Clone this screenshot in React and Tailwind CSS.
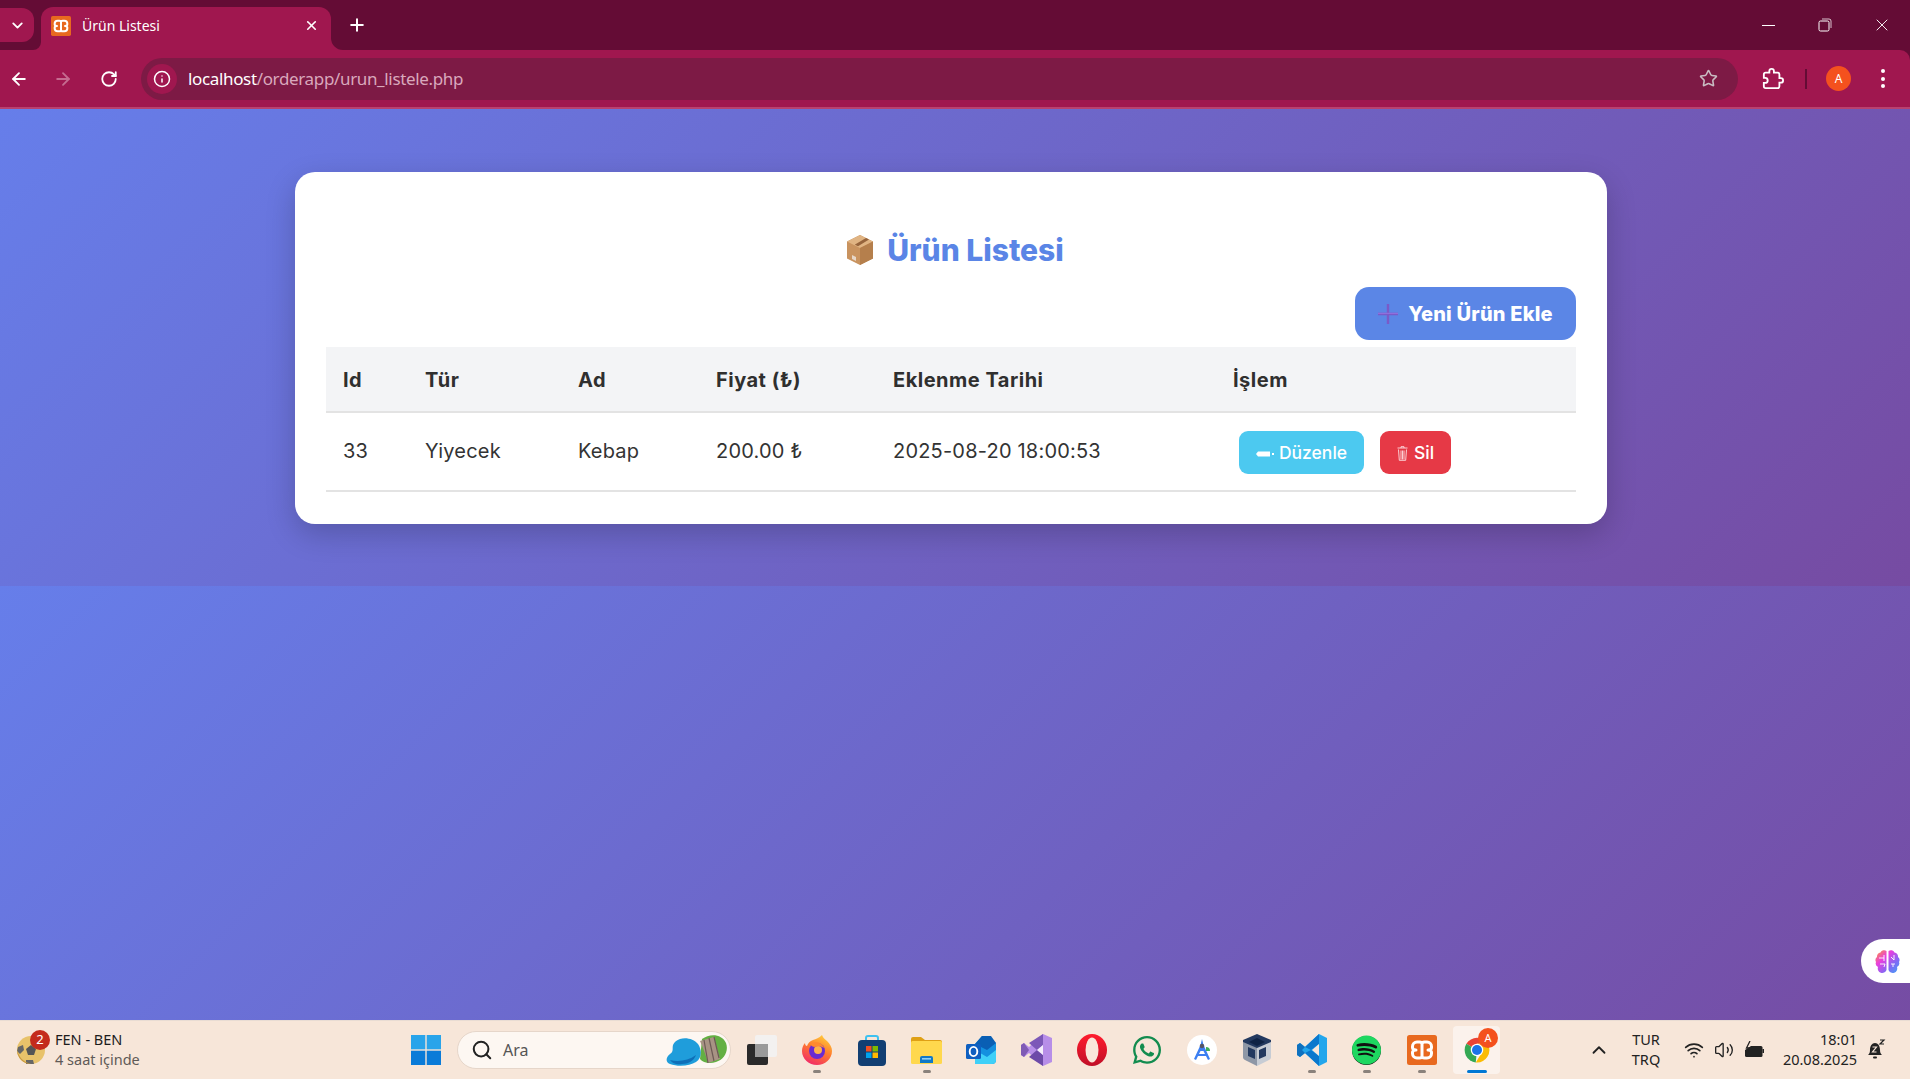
import React from "react";
import { ArrowLeft, ArrowRight, RotateCw, Info, Star, X, Plus, ChevronDown, ChevronUp, Wifi, Volume2, Search } from "lucide-react";
import { FaWhatsapp, FaSpotify } from "react-icons/fa";

const Xampp = ({ s = 30 }) => (
  <svg width={s} height={s} viewBox="0 0 30 30">
    <rect width="30" height="30" rx="2.500" fill="#e8691f" />
    <path d="M10 7h2.500c1.500 0 2.500 1 2.500 2 0-1 1-2 2.500-2H20a4.500 4.500 0 0 1 4.500 4.500v1c0 1.500-1.500 2.500-3.500 2.500 2 0 3.500 1 3.500 2.500v1A4.500 4.500 0 0 1 20 23h-2.500c-1.500 0-2.500-1-2.500-2 0 1-1 2-2.500 2H10a4.500 4.500 0 0 1-4.500-4.500v-1C5.500 16 7 15 9 15c-2 0-3.500-1-3.500-2.500v-1A4.500 4.500 0 0 1 10 7zM15 9v12" fill="none" stroke="#fff" strokeWidth="3" strokeLinejoin="round" />
  </svg>
);

const Firefox = () => (
  <svg width="30" height="32" viewBox="0 0 30 32">
    <defs>
      <linearGradient id="ff" x1="0.7" y1="0" x2="0.2" y2="1">
        <stop offset="0" stopColor="#ffc93a" />
        <stop offset="0.45" stopColor="#ff7a2e" />
        <stop offset="1" stopColor="#f0246e" />
      </linearGradient>
    </defs>
    <path d="M20 1c1 3 3 4 5 6 3 3 5 6 5 10 0 8-7 14-15 14S0 25 0 17c0-3 1-6 3-8 0 2 1 3 2 3 1-3 3-5 6-6 3-1 6-2 9-5z" fill="url(#ff)" />
    <circle cx="15" cy="17" r="8" fill="#6a2bd0" />
    <circle cx="16" cy="16" r="4" fill="#ffb14a" />
    <path d="M8 10c5-3 12-2 14 4-3-2-6-2-9-1-2 0-4-1-5-3z" fill="#ff8a2e" />
  </svg>
);

const Store = () => (
  <svg width="30" height="31" viewBox="0 0 30 31">
    <path d="M9 6V3a2 2 0 0 1 2-2h8a2 2 0 0 1 2 2v3" fill="none" stroke="#3ec1f0" strokeWidth="2" />
    <rect x="1" y="5" width="28" height="26" rx="4" fill="#123f73" />
    <rect x="9" y="11" width="5.5" height="5.5" fill="#f25022" />
    <rect x="15.5" y="11" width="5.5" height="5.5" fill="#7fba00" />
    <rect x="9" y="17.5" width="5.5" height="5.5" fill="#00a4ef" />
    <rect x="15.5" y="17.5" width="5.5" height="5.5" fill="#ffb900" />
  </svg>
);

const Folder = () => (
  <svg width="31" height="28" viewBox="0 0 31 28">
    <path d="M0 3a2 2 0 0 1 2-2h8l4 3h15a2 2 0 0 1 2 2v4H0z" fill="#dfa015" />
    <rect y="5" width="31" height="23" rx="1.5" fill="#ffd84d" />
    <path d="M9 27v-5a2 2 0 0 1 2-2h9a2 2 0 0 1 2 2v5z" fill="#1179c7" />
    <rect x="11" y="22" width="9" height="1.6" fill="#8fd0f5" />
  </svg>
);

const Outlook = () => (
  <svg width="31" height="30" viewBox="0 0 31 30">
    <path d="M16 1l14 7v17a4 4 0 0 1-4 4H9V9z" fill="#1490df" />
    <path d="M9 9l7-8h9l5 7-9 7z" fill="#0a5fb4" />
    <path d="M9 15l12 7 9-7v10a4 4 0 0 1-4 4H9z" fill="#3fd0f8" />
    <rect y="9" width="15" height="15" rx="1.5" fill="#0f5fc0" />
    <ellipse cx="7.5" cy="16.5" rx="3.8" ry="4.6" fill="none" stroke="#fff" strokeWidth="1.9" />
  </svg>
);

const VS = () => (
  <svg width="31" height="32" viewBox="0 0 31 32">
    <path d="M22 0l9 4v24l-9 4-14-13-5 4-3-2V11l3-2 5 4z" fill="#b78ee8" />
    <path d="M22 0v11l-6 5-8-7z" fill="#7c58b8" />
    <path d="M22 32V21l-6-5-8 7z" fill="#6d4aa8" />
    <path d="M0 11l3-2 5 7-5 7-3-2z" fill="#7f5bb5" />
    <path d="M22 11v10l-6-5z" fill="#f4eefb" />
  </svg>
);

const Opera = () => (
  <svg width="30" height="32" viewBox="0 0 30 32">
    <defs>
      <linearGradient id="op" x1="0" y1="0" x2="0" y2="1">
        <stop offset="0" stopColor="#ff1b2d" />
        <stop offset="1" stopColor="#c00f28" />
      </linearGradient>
    </defs>
    <ellipse cx="15" cy="16" rx="15" ry="16" fill="url(#op)" />
    <ellipse cx="15" cy="16" rx="6.5" ry="12.5" fill="#f9e7da" />
  </svg>
);

const AndroidStudio = () => (
  <svg width="30" height="30" viewBox="0 0 30 30">
    <circle cx="15" cy="15" r="15" fill="#fff" />
    <path d="M15 4l1.500 6h-3zM13 11h4l6 13-2 1-4.500-9h-3L9 25l-2-1z" fill="#3b7ff2" />
    <path d="M10 19h10v2H10z" fill="#3b7ff2" />
    <circle cx="15" cy="11" r="2.300" fill="#556" />
    <path d="M19 12a4 4 0 0 1 4 4h-4z" fill="#3fae5c" />
  </svg>
);

const VBox = () => (
  <svg width="28" height="32" viewBox="0 0 28 32">
    <path d="M14 0l14 6v6l-14 6L0 12V6z" fill="#23395f" />
    <path d="M0 8l14 6v18L2 26a3 3 0 0 1-2-3z" fill="#8e97a6" />
    <path d="M28 8l-14 6v18l12-6a3 3 0 0 0 2-3z" fill="#c7ccd4" />
    <path d="M14 4l8 4-8 4-8-4z" fill="#0f2344" />
    <path d="M5 13l7 3v9l-7-3zM23 13l-7 3v9l7-3z" fill="#23395f" />
  </svg>
);

const VSCode = () => (
  <svg width="30" height="32" viewBox="0 0 30 32">
    <path d="M22 0l8 4v24l-8 4-14-13-5 4-3-2V11l3-2 5 4z" fill="#23a6ec" />
    <path d="M22 0v10l-8 6-6-3z" fill="#0a78cd" />
    <path d="M22 32V22l-8-6-6 3z" fill="#0a78cd" />
    <path d="M22 10v12l-7-6z" fill="#f9e7da" />
    <path d="M3 9l5 4-3 3 3 3-5 4-3-2V11z" fill="#0e71bf" />
  </svg>
);

const Chrome = () => (
  <svg width="30" height="30" viewBox="0 0 48 48">
    <path d="M24 24L7 14A20 20 0 0 1 41 14H24z" fill="#ea4335" />
    <path d="M24 24L7 14a20 20 0 0 0 15 30z" fill="#34a853" />
    <path d="M24 14h17a20 20 0 0 1-19 30l9-15z" fill="#fbbc04" />
    <circle cx="24" cy="24" r="10" fill="#fff" />
    <circle cx="24" cy="24" r="8" fill="#1a73e8" />
  </svg>
);

const Brain = () => (
  <svg width="25" height="25" viewBox="0 0 25 25">
    <defs>
      <linearGradient id="br" x1="0" y1="0" x2="1" y2="1">
        <stop offset="0" stopColor="#ff9a2e" />
        <stop offset="0.35" stopColor="#e83ee0" />
        <stop offset="0.7" stopColor="#7b6cf5" />
        <stop offset="1" stopColor="#3ea6f5" />
      </linearGradient>
    </defs>
    <path d="M11.500 2a4 4 0 0 0-6 1.500A4 4 0 0 0 2 8a4 4 0 0 0-1 5 4 4 0 0 0 2 5 4.500 4.500 0 0 0 8.500 3zM13.500 2a4 4 0 0 1 6 1.500A4 4 0 0 1 23 8a4 4 0 0 1 1 5 4 4 0 0 1-2 5 4.500 4.500 0 0 1-8.500 3z" fill="url(#br)" />
    <path d="M4 9h5M9 6v6M5 15h5l-1 3M16 8l3 3M19 6v5M16 15h4M18 15v3" stroke="#fff" strokeWidth="0.9" fill="none" />
  </svg>
);

const Box = () => (
  <svg width="30" height="32" viewBox="0 0 30 32">
    <path d="M15 1l13 6.500v17L15 31 2 24.500v-17z" fill="#c9935f" />
    <path d="M15 1l13 6.500L15 14 2 7.500z" fill="#e0b483" />
    <path d="M15 14l13-6.500v17L15 31z" fill="#b57f4c" />
    <path d="M21 4l-11 6.500 0 .3 3 1.500L24 5.500z" fill="#96643c" />
    <path d="M7 21l4 2v4l-4-2z" fill="#ece3da" opacity="0.85" />
  </svg>
);

const PlusEmoji = () => (
  <svg width="20" height="20" viewBox="0 0 20 20">
    <path d="M8.800 0h2.400v8.800H20v2.400h-8.800V20H8.800v-8.800H0V8.800h8.800z" fill="#7a5ac8" />
    <path d="M8.800 8.800H0v1.200h20V8.800z" fill="#8f6fdc" />
  </svg>
);

const Pencil = () => (
  <svg width="18" height="8" viewBox="0 0 18 8" className="mr-[5px]">
    <path d="M0 4l2-2.500h12V6.500H2z" fill="#fff" />
    <rect x="16" y="3" width="2" height="2" fill="#fff" />
  </svg>
);

const Trash = () => (
  <svg width="11" height="15" viewBox="0 0 11 15" className="mr-[6px]">
    <path d="M0.500 2h10M4 2V.7h3V2M1.500 3.500l.8 10.800h6.400l.8-10.800M4 4.500v9M5.500 4.500v9M7 4.500v9" fill="none" stroke="#fde0e3" strokeWidth="0.9" />
  </svg>
);

const Ball = () => (
  <svg width="28" height="28" viewBox="0 0 28 28">
    <circle cx="14" cy="14" r="14" fill="#e8c26a" />
    <path d="M14 9l5 4-2 6h-6l-2-6z" fill="#555" />
    <path d="M1 11l5-2 1 5-4 4-3-3zM9 24l7 0 1 4H9z" fill="#666" />
    <path d="M0 14a14 14 0 0 0 14 14c-8-2-12-7-14-14z" fill="#c99a3f" />
  </svg>
);

const Illustration = () => (
  <svg width="62" height="34" viewBox="0 0 62 34">
    <path d="M36 6c8-6 20-5 24 4 3 8-2 17-10 19-6 2-13 1-16-3z" fill="#63b043" />
    <path d="M34 8l14-4 6 22-12 4c-2-8-5-15-8-22z" fill="#a89384" />
    <path d="M38 7l4 23M43 5l5 23M48 4l5 21" stroke="#6d5a55" strokeWidth="1.200" />
    <path d="M14 6c6-2 14 0 18 5 4 6 4 14-2 18-6 4-18 5-26 2-5-2-4-7 0-10 4-3 2-5 3-9 1-3 4-5 7-6z" fill="#1f9ddb" />
    <path d="M4 27c8 2 18 1 26-5-2 6-8 9-14 9-5 1-9 0-12-4z" fill="#0f6fb8" />
  </svg>
);

const Dot = () => (
  <span className="absolute bottom-[1px] left-1/2 h-[3px] w-[8px] -translate-x-1/2 rounded-full bg-[#8a817b]" />
);

const Slot = ({ children, dot }) => (
  <div className="relative flex h-[48px] w-[55px] shrink-0 items-center justify-center">
    {children}
    {dot && <Dot />}
  </div>
);

const rows = [
  { id: "33", type: "Yiyecek", name: "Kebap", price: "200.00 ₺", date: "2025-08-20 18:00:53" },
];

export default function App() {
  return (
    <div className="flex h-[1079px] w-[1910px] flex-col overflow-hidden font-['Noto_Sans',sans-serif]">
      {/* tab strip */}
      <div className="flex h-[50px] shrink-0 items-end bg-[#640c35]">
        <div className="mb-[8px] flex h-[34px] w-[34px] items-center justify-center rounded-r-[12px] bg-[#a0174f]">
          <ChevronDown size={17} color="#fff" strokeWidth={2.6} />
        </div>
        <div className="relative ml-[7px] flex h-[43px] w-[290px] items-center rounded-t-[12px] bg-[#a0174f] pb-[6px] pl-[10px]">
          <Xampp s={20} />
          <span className="ml-[11px] text-[14px] text-white">Ürün Listesi</span>
          <X size={15} color="#fff" strokeWidth={2.6} className="absolute left-[263px] top-[11px]" />
          <svg width="12" height="12" viewBox="0 0 12 12" className="absolute bottom-0 left-[290px]">
            <path d="M0 0a12 12 0 0 0 12 12H0z" fill="#a0174f" />
          </svg>
          <svg width="8" height="8" viewBox="0 0 8 8" className="absolute bottom-0 left-[-8px]">
            <path d="M8 0a8 8 0 0 1-8 8h8z" fill="#a0174f" />
          </svg>
        </div>
        <Plus size={20} color="#fff" strokeWidth={2.4} className="mb-[15px] ml-[16px]" />
        <div className="mb-[15px] ml-auto flex items-center gap-[43px] pr-[18px]">
          <span className="h-[1px] w-[13px] bg-white" />
          <svg width="14" height="14" viewBox="0 0 14 14" fill="none" stroke="#fff" strokeWidth="1">
            <rect x="1" y="3" width="10" height="10" rx="1.500" />
            <path d="M4 1h7a2 2 0 0 1 2 2v7" opacity="0.75" />
          </svg>
          <X size={20} color="#fff" strokeWidth={1.1} className="ml-[-3px]" />
        </div>
      </div>

      {/* toolbar */}
      <div className="flex h-[59px] shrink-0 items-center rounded-tr-[10px] border-b-2 border-[#b9416f] bg-[#a0174f] pl-[9px] shadow-[10px_0_0_#640c35]">
        <ArrowLeft size={20} color="#fff" strokeWidth={2.2} />
        <ArrowRight size={20} color="#c56c90" strokeWidth={2.2} className="ml-[24px]" />
        <RotateCw size={18} color="#fff" strokeWidth={2.4} className="ml-[27px]" />
        <div className="ml-[23px] flex h-[42px] w-[1597px] items-center rounded-full bg-[#7d1a45] pl-[6px] pr-[20px]">
          <span className="flex h-[30px] w-[30px] items-center justify-center rounded-full bg-[#a0174f]">
            <Info size={18} color="#fff" strokeWidth={2} />
          </span>
          <span className="ml-[11px] pt-[1px] text-[17px] tracking-[-0.35px] text-white">
            localhost<span className="text-[#d9a8bc]">/orderapp/urun_listele.php</span>
          </span>
          <Star size={19} color="#c9bcc2" strokeWidth={2} className="ml-auto" />
        </div>
        <svg width="22" height="22" viewBox="0 0 24 24" fill="none" stroke="#fff" strokeWidth="2" className="ml-[24px]">
          <path d="M20.500 11H19V7c0-1.100-.9-2-2-2h-4V3.500C13 2.120 11.880 1 10.500 1S8 2.120 8 3.500V5H4c-1.100 0-1.990.9-1.990 2v3.800H3.500c1.490 0 2.700 1.210 2.700 2.700s-1.210 2.700-2.700 2.700H2V20c0 1.100.9 2 2 2h13c1.100 0 2-.9 2-2v-4h1.500c1.380 0 2.500-1.120 2.500-2.500S21.880 11 20.500 11z" />
        </svg>
        <span className="ml-[21px] h-[20px] w-[2px] bg-[#640c35]" />
        <span className="ml-[19px] flex h-[25px] w-[25px] items-center justify-center rounded-full bg-[#f4511e] text-[12px] text-white">A</span>
        <span className="ml-[30px] flex flex-col gap-[3.500px]">
          <span className="h-[4px] w-[4px] rounded-full bg-white" />
          <span className="h-[4px] w-[4px] rounded-full bg-white" />
          <span className="h-[4px] w-[4px] rounded-full bg-white" />
        </span>
      </div>

      {/* page */}
      <main className="relative min-h-0 flex-1 bg-[linear-gradient(135deg,#667eea_0%,#764ba2_100%)] bg-[length:100%_477px] pl-[295px] pt-[63px] font-['Inter',sans-serif]">
        <div className="w-[1312px] rounded-[20px] bg-white px-[31px] pb-[32px] pt-[54px] shadow-[0_10px_30px_rgba(0,0,0,0.2)]">
          <h2 className="flex h-[48px] items-center justify-center pl-[7px] text-[30px] font-extrabold tracking-[0px] text-[#5a85e6]">
            <Box />
            <span className="ml-[12px]">Ürün Listesi</span>
          </h2>
          <div className="mt-[13px] flex justify-end">
            <button className="flex h-[53px] w-[221px] items-center justify-center rounded-[14px] bg-[#5b86e6] text-[20px] font-extrabold tracking-[0.2px] text-white">
              <PlusEmoji />
              <span className="ml-[10px]">Yeni Ürün Ekle</span>
            </button>
          </div>
          <table className="mt-[7px] w-[1250px] table-fixed border-collapse text-left">
            <colgroup>
              <col className="w-[82px]" />
              <col className="w-[153px]" />
              <col className="w-[138px]" />
              <col className="w-[177px]" />
              <col className="w-[340px]" />
              <col className="w-[360px]" />
            </colgroup>
            <thead>
              <tr className="h-[65px] border-b-2 border-[#e3e3e3] bg-[#f3f4f6] text-[20px] font-bold tracking-[0.5px] text-[#2f2f2f]">
                <th className="pl-[17px] pt-[2px]">Id</th>
                <th className="pl-[17px] pt-[2px]">Tür</th>
                <th className="pl-[17px] pt-[2px]">Ad</th>
                <th className="pl-[17px] pt-[2px]">Fiyat (₺)</th>
                <th className="pl-[17px] pt-[2px]">Eklenme Tarihi</th>
                <th className="pl-[17px] pt-[2px]">İşlem</th>
              </tr>
            </thead>
            <tbody>
              {rows.map((r) => (
                <tr key={r.id} className="h-[79px] border-b-2 border-[#e3e3e3] text-[20px] tracking-[0.2px] text-[#333]">
                  <td className="pb-[2px] pl-[17px]">{r.id}</td>
                  <td className="pb-[2px] pl-[17px]">{r.type}</td>
                  <td className="pb-[2px] pl-[17px]">{r.name}</td>
                  <td className="pb-[2px] pl-[17px]">{r.price}</td>
                  <td className="pb-[2px] pl-[17px]">{r.date}</td>
                  <td className="pl-[23px] pt-[2px]">
                    <div className="flex items-center gap-[16px] text-[17.5px] font-medium tracking-normal text-white">
                      <button className="flex h-[43px] w-[125px] items-center justify-center rounded-[9px] bg-[#4cc9f0] pt-[2px]">
                        <Pencil />Düzenle
                      </button>
                      <button className="flex h-[43px] w-[71px] items-center justify-center rounded-[9px] bg-[#e63946] pt-[2px]">
                        <Trash />Sil
                      </button>
                    </div>
                  </td>
                </tr>
              ))}
            </tbody>
          </table>
        </div>
        <div className="absolute right-0 top-[830px] flex h-[44px] w-[49px] items-center rounded-l-[22px] bg-white pl-[14px]">
          <Brain />
        </div>
      </main>

      {/* taskbar */}
      <div className="flex h-[59px] shrink-0 items-center border-t border-[#e9dcd3] bg-[#f7e6d9] pl-[17px]">
        <div className="relative h-[28px] w-[28px]">
          <Ball />
          <span className="absolute left-[13px] top-[-6px] flex h-[20px] w-[20px] items-center justify-center rounded-full bg-[#c42b1c] text-[13px] text-white">2</span>
        </div>
        <div className="ml-[10px] flex w-[120px] flex-col pb-[2px] text-[14.5px] leading-[20px]">
          <span className="text-[#1c1c1c]">FEN - BEN</span>
          <span className="text-[#5f5a57]">4 saat içinde</span>
        </div>
        <svg width="30" height="30" viewBox="0 0 30 30" className="ml-[236px] shrink-0">
          <rect width="14.300" height="14.300" fill="#29a4ea" />
          <rect x="15.700" width="14.300" height="14.300" fill="#29a4ea" />
          <rect y="15.700" width="14.300" height="14.300" fill="#0a7bd8" />
          <rect x="15.700" y="15.700" width="14.300" height="14.300" fill="#0a7bd8" />
        </svg>
        <div className="ml-[16px] flex h-[38px] w-[274px] shrink-0 items-center justify-between rounded-full border border-[#e6d6ca] bg-[#fdf7f2] pl-[13px] pr-[2px]">
          <span className="flex items-center">
            <Search size={22} color="#222" strokeWidth={2.2} />
            <span className="ml-[10px] text-[16px] text-[#555]">Ara</span>
          </span>
          <Illustration />
        </div>
        <svg width="30" height="30" viewBox="0 0 30 30" className="ml-[16px] shrink-0">
          <rect x="0" y="9" width="21" height="21" rx="2" fill="#2a2a2a" />
          <rect x="8" y="0" width="22" height="22" rx="2" fill="#f2f2f2" opacity="0.9" />
          <rect x="8" y="9" width="13" height="13" fill="#9a9a9a" />
        </svg>
        <div className="ml-[12px] flex items-center">
          <Slot dot><Firefox /></Slot>
          <Slot><Store /></Slot>
          <Slot dot><Folder /></Slot>
          <Slot><Outlook /></Slot>
          <Slot><VS /></Slot>
          <Slot><Opera /></Slot>
          <Slot><FaWhatsapp size={32} color="#128c4f" /></Slot>
          <Slot><AndroidStudio /></Slot>
          <Slot><VBox /></Slot>
          <Slot dot><VSCode /></Slot>
          <Slot dot>
            <span className="flex h-[29px] w-[29px] items-center justify-center rounded-full bg-[#111]">
              <FaSpotify size={30} color="#1ed760" />
            </span>
          </Slot>
          <Slot dot><Xampp s={30} /></Slot>
          <div className="relative mx-[4px] flex h-[48px] w-[47px] shrink-0 items-center justify-center rounded-[4px] bg-[#fbf2ec]">
            <Chrome />
            <span className="absolute left-[25px] top-[2px] flex h-[20px] w-[20px] items-center justify-center rounded-full bg-[#f4511e] text-[11px] text-white">A</span>
            <span className="absolute bottom-[1px] left-1/2 h-[3px] w-[20px] -translate-x-1/2 rounded-full bg-[#0078d4]" />
          </div>
        </div>
        <ChevronUp size={22} color="#222" strokeWidth={2} className="ml-[84px] shrink-0" />
        <div className="ml-[16px] flex w-[40px] flex-col items-center pb-[2px] text-[14.5px] leading-[20px] text-[#222]">
          <span>TUR</span>
          <span>TRQ</span>
        </div>
        <Wifi size={20} color="#222" strokeWidth={2} className="ml-[18px] shrink-0" />
        <Volume2 size={20} color="#222" strokeWidth={1.6} className="ml-[10px] shrink-0" />
        <svg width="20" height="18" viewBox="0 0 20 18" className="ml-[10px] shrink-0">
          <path d="M7 5h10a1.500 1.500 0 0 1 1.500 1.500v8A1.500 1.500 0 0 1 17 16H2.500A1.500 1.500 0 0 1 1 14.500V9z" fill="#222" />
          <rect x="18.500" y="8" width="1.500" height="4" fill="#222" />
          <path d="M6 0L2.500 7h3L3 12" fill="none" stroke="#222" strokeWidth="1.300" />
        </svg>
        <div className="ml-[13px] flex w-[80px] flex-col items-end pb-[2px] text-[14.5px] leading-[20px] text-[#222]">
          <span>18:01</span>
          <span>20.08.2025</span>
        </div>
        <svg width="20" height="22" viewBox="0 0 20 22" className="ml-[9px] shrink-0">
          <path d="M2 16c1-1 2-2 2-5 0-4 2-7 5-7s5 3 5 7c0 3 1 4 2 5z" fill="#222" />
          <rect x="7" y="17.500" width="4" height="2" rx="1" fill="#222" />
          <path d="M6.500 8h4l-4 5h4" fill="none" stroke="#f7e6d9" strokeWidth="1.200" />
          <path d="M14 1h4l-4 4h4" fill="none" stroke="#222" strokeWidth="1.200" />
        </svg>
      </div>
    </div>
  );
}
